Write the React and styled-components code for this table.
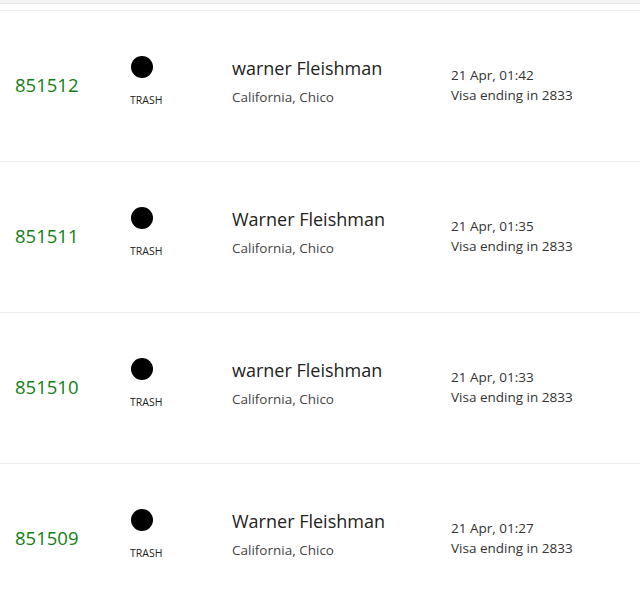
import styled, { createGlobalStyle } from "styled-components";

const GlobalStyle = createGlobalStyle`
  body {
    margin: 0;
    background: #fff;
    font-family: "Open Sans", "Noto Sans", sans-serif;
  }
`;

const orders = [
  { id: "851512", name: "warner Fleishman", place: "California, Chico", date: "21 Apr, 01:42", card: "Visa ending in 2833" },
  { id: "851511", name: "Warner Fleishman", place: "California, Chico", date: "21 Apr, 01:35", card: "Visa ending in 2833" },
  { id: "851510", name: "warner Fleishman", place: "California, Chico", date: "21 Apr, 01:33", card: "Visa ending in 2833" },
  { id: "851509", name: "Warner Fleishman", place: "California, Chico", date: "21 Apr, 01:27", card: "Visa ending in 2833" },
];

const Table = styled.div`
  width: 640px;
  height: 614px;
  overflow: hidden;
`;

const HeaderEdge = styled.div`
  height: 3px;
  background: #f3f3f3;
  border-bottom: 1px solid #e3e3e3;
  margin-bottom: 6px;
`;

const Row = styled.div`
  display: grid;
  grid-template-columns: 115px 102px 219px 1fr;
  align-items: center;
  height: 150px;
  padding-left: 15px;
  border-top: 1px solid #eeeeee;
`;

const OrderId = styled.div`
  font-size: 18.5px;
  line-height: 24px;
  color: #138013;
  padding-bottom: 2px;
`;

const Status = styled.div`
  display: flex;
  flex-direction: column;
  align-items: flex-start;
  padding-bottom: 10px;
`;

const Dot = styled.span`
  width: 22px;
  height: 22px;
  border-radius: 50%;
  background: #000;
  margin-left: 1px;
`;

const StatusLabel = styled.span`
  margin-top: 16px;
  font-size: 10.5px;
  line-height: 12px;
  color: #222;
`;

const Customer = styled.div`
  display: flex;
  flex-direction: column;
  padding-bottom: 11px;
`;

const Name = styled.div`
  font-size: 18px;
  line-height: 24px;
  color: #222;
`;

const Place = styled.div`
  margin-top: 8px;
  font-size: 13.5px;
  line-height: 18px;
  color: #444;
`;

const Payment = styled.div`
  display: flex;
  flex-direction: column;
  font-size: 13.5px;
  line-height: 20px;
  color: #333;
  padding-bottom: 2px;
`;

export default function App() {
  return (
    <>
      <GlobalStyle />
      <Table>
        <HeaderEdge />
        {orders.map((o) => (
          <Row key={o.id}>
            <OrderId>{o.id}</OrderId>
            <Status>
              <Dot />
              <StatusLabel>TRASH</StatusLabel>
            </Status>
            <Customer>
              <Name>{o.name}</Name>
              <Place>{o.place}</Place>
            </Customer>
            <Payment>
              <span>{o.date}</span>
              <span>{o.card}</span>
            </Payment>
          </Row>
        ))}
      </Table>
    </>
  );
}
